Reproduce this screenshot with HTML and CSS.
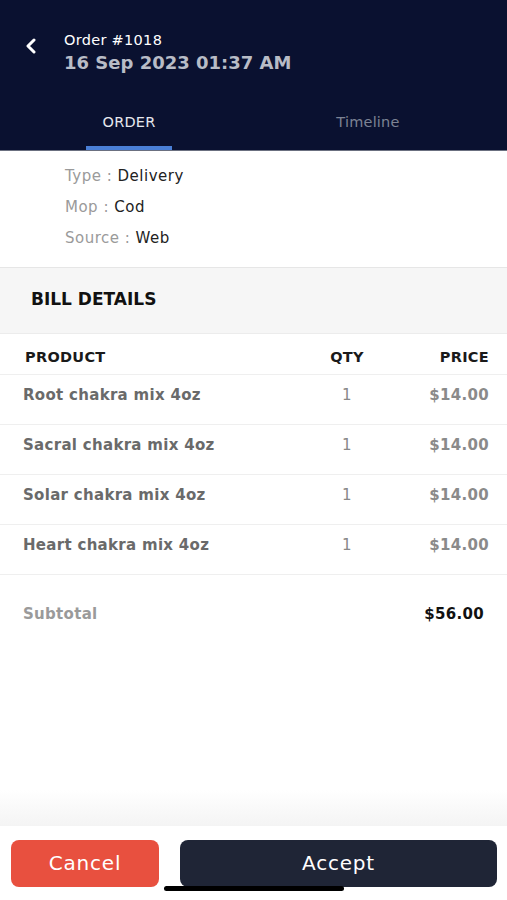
FILE: index.html
```html
<!DOCTYPE html>
<html>
<head>
<meta charset="utf-8">
<link rel="stylesheet" href="styles.css">
</head>
<body>
<div class="screen">
  <header class="header">
    <div class="title-row">
      <svg class="back" width="14" height="16" viewBox="0 0 14 16"><path d="M10 2 L4 8 L10 14" fill="none" stroke="#fff" stroke-width="3" stroke-linecap="round" stroke-linejoin="round"/></svg>
      <div class="titles">
        <div class="order-no">Order #1018</div>
        <div class="order-date">16 Sep 2023 01:37 AM</div>
      </div>
    </div>
    <nav class="tabs">
      <div class="tab active">ORDER</div>
      <div class="tab">Timeline</div>
    </nav>
  </header>

  <section class="info">
    <div class="info-line"><span class="lbl">Type : </span><span class="val">Delivery</span></div>
    <div class="info-line"><span class="lbl">Mop : </span><span class="val">Cod</span></div>
    <div class="info-line"><span class="lbl">Source : </span><span class="val">Web</span></div>
  </section>

  <div class="bill-head">BILL DETAILS</div>

  <div class="table">
    <div class="row head"><span class="c-prod">PRODUCT</span><span class="c-qty">QTY</span><span class="c-price">PRICE</span></div>
    <div class="row"><span class="c-prod">Root chakra mix 4oz</span><span class="c-qty">1</span><span class="c-price">$14.00</span></div>
    <div class="row"><span class="c-prod">Sacral chakra mix 4oz</span><span class="c-qty">1</span><span class="c-price">$14.00</span></div>
    <div class="row"><span class="c-prod">Solar chakra mix 4oz</span><span class="c-qty">1</span><span class="c-price">$14.00</span></div>
    <div class="row"><span class="c-prod">Heart chakra mix 4oz</span><span class="c-qty">1</span><span class="c-price">$14.00</span></div>
  </div>

  <div class="subtotal"><span class="sub-lbl">Subtotal</span><span class="sub-val">$56.00</span></div>

  <div class="spacer"></div>

  <footer class="footer">
    <div class="fade"></div>
    <div class="actions">
      <button class="btn cancel">Cancel</button>
      <button class="btn accept">Accept</button>
    </div>
    <div class="home-bar"></div>
  </footer>
</div>
</body>
</html>
```

FILE: styles.css
```css
* { box-sizing: border-box; }
html, body { margin: 0; padding: 0; }
body {
  font-family: "DejaVu Sans", "Noto Sans", sans-serif;
  background: #fff;
  width: 507px;
  height: 900px;
  overflow: hidden;
}
.screen {
  width: 507px;
  height: 900px;
  display: flex;
  flex-direction: column;
}
.header {
  background: #0a1130;
  height: 151px;
  display: flex;
  flex-direction: column;
  border-bottom: 1px solid #6b7080;
}
.title-row {
  display: flex;
  align-items: flex-start;
  padding: 31px 0 0 24px;
  height: 96px;
}
.back { margin-top: 7px; }
.titles { margin-left: 26px; }
.order-no {
  color: #fff;
  font-size: 14.5px;
  font-weight: 500;
  line-height: 18px;
  letter-spacing: 0.3px;
}
.order-date {
  color: #b8bcc6;
  font-size: 18px;
  font-weight: 700;
  line-height: 24px;
  margin-top: 2px;
}
.tabs {
  display: grid;
  grid-template-columns: 258px 220px;
  flex: 1;
}
.tab {
  text-align: center;
  font-size: 14.5px;
  color: #7d8394;
  padding-top: 18px;
  position: relative;
  letter-spacing: 0.2px;
}
.tab.active { color: #e6e8ee; }
.tab.active::after {
  content: "";
  position: absolute;
  left: 86px;
  width: 86px;
  bottom: 0;
  height: 4px;
  background: #4a7fd6;
}
.info {
  padding: 10px 0 13px 65px;
  border-bottom: 1px solid #e6e6e6;
}
.info-line {
  font-size: 15px;
  line-height: 31px;
  letter-spacing: 0.5px;
}
.lbl { color: #9a9a9a; }
.val { color: #222; font-weight: 500; }
.bill-head {
  background: #f6f6f6;
  height: 66px;
  display: flex;
  align-items: center;
  padding: 0 0 3px 31px;
  font-size: 17px;
  font-weight: 600;
  color: #111;
  border-bottom: 1px solid #ececec;
}
.row {
  display: grid;
  grid-template-columns: 1fr 60px 112px;
  align-items: start;
  height: 50px;
  padding: 10px 18px 0 23px;
  line-height: 20px;
  border-bottom: 1px solid #efefef;
  font-size: 15px;
  font-weight: 600;
  color: #6a6a6a;
  letter-spacing: 0.3px;
}
.row.head {
  height: 41px;
  padding-top: 13px;
  color: #1a1a1a;
  font-size: 14.5px;
  font-weight: 700;
  padding-left: 25px;
}
.c-qty { text-align: center; }
.c-price { text-align: right; }
.row .c-qty { font-weight: 400; color: #888; }
.row .c-price { color: #8a8a8a; }
.row.head .c-qty, .row.head .c-price { color: #1a1a1a; font-weight: 700; }
.subtotal {
  display: flex;
  justify-content: space-between;
  align-items: center;
  padding: 0 23px;
  height: 77px;
}
.sub-lbl { color: #9a9a9a; font-size: 15px; font-weight: 600; letter-spacing: 0.3px; }
.sub-val { color: #111; font-size: 15px; font-weight: 700; letter-spacing: 0.3px; }
.spacer { flex: 1; }
.footer {
  position: relative;
  height: 110px;
  display: flex;
  flex-direction: column;
}
.fade {
  height: 36px;
  background: linear-gradient(#ffffff, #f4f4f4);
}
.actions {
  flex: 1;
  background: #fff;
  display: flex;
  gap: 21px;
  padding: 14px 10px 0 11px;
  border-radius: 12px 12px 0 0;
}
.btn {
  height: 47px;
  border: none;
  border-radius: 8px;
  color: #fff;
  font-family: inherit;
  font-size: 20px;
  font-weight: 400;
  letter-spacing: 0.8px;
  padding: 0 0 2px;
}
.cancel { width: 148px; background: #e8503f; }
.accept { flex: 1; background: #1f2536; }
.home-bar {
  position: absolute;
  left: 164px;
  width: 180px;
  top: 96px;
  height: 5px;
  border-radius: 3px;
  background: #000;
}
```
